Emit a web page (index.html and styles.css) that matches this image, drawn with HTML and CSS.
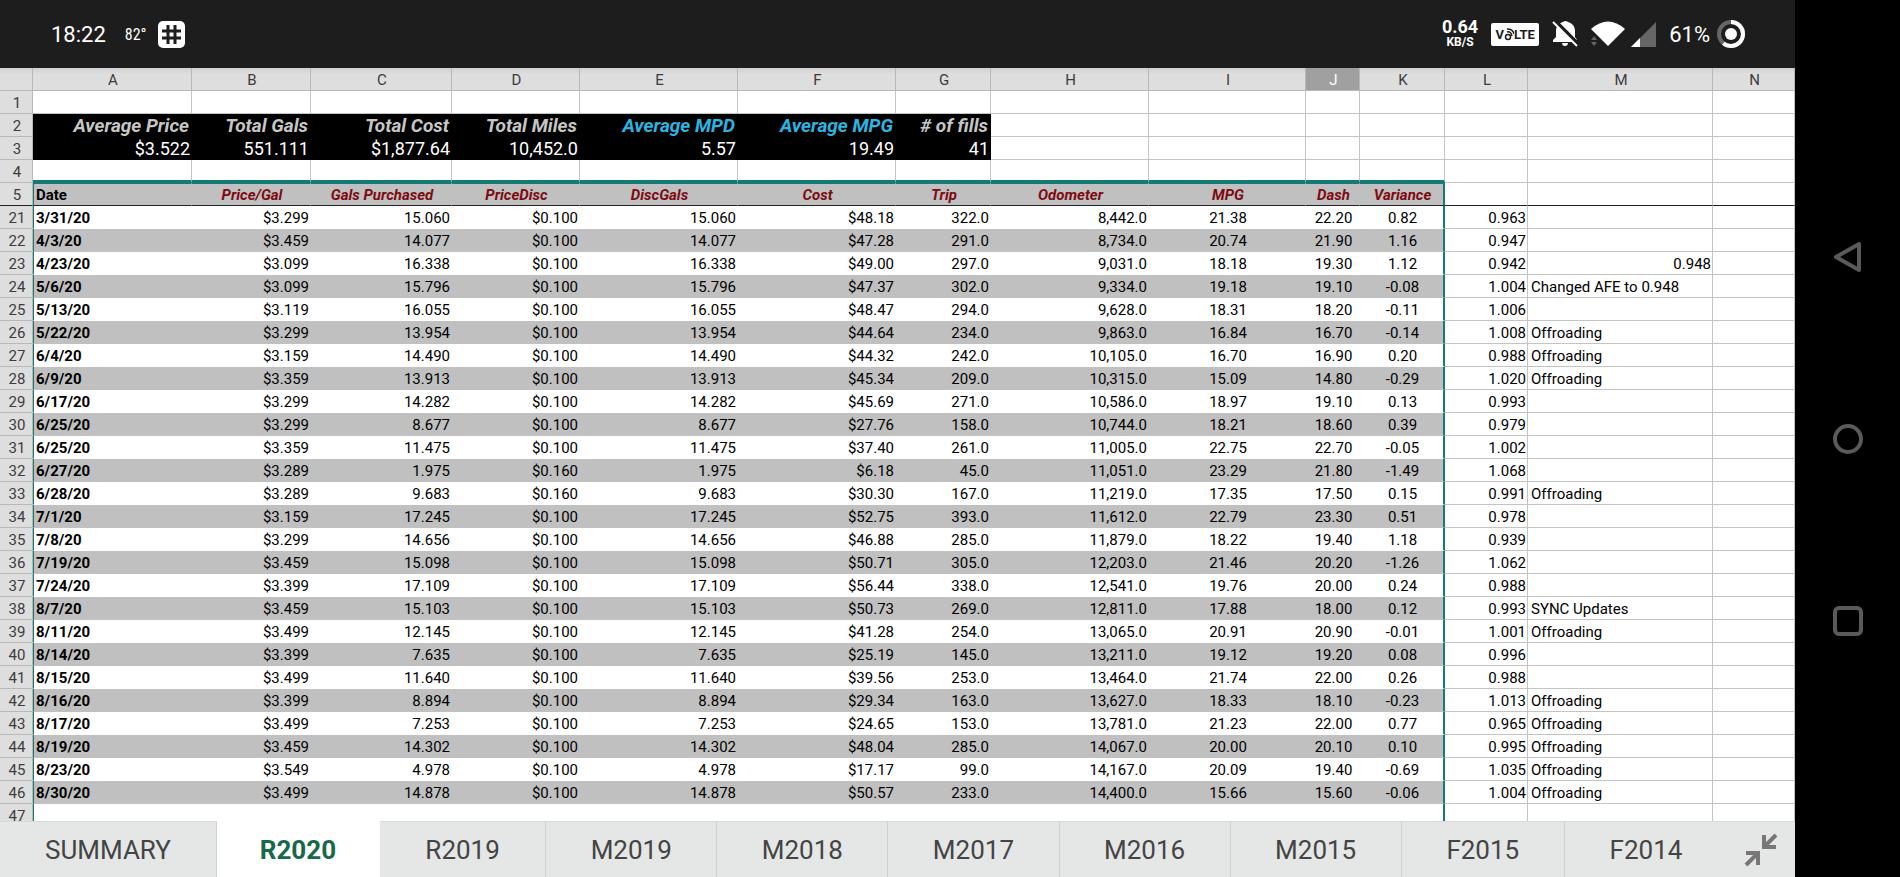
FILE: index.html
```html
<!DOCTYPE html>
<html lang="en">
<head>
    <meta charset="UTF-8">
    <meta name="viewport" content="width=device-width, initial-scale=1.0">
    <title>Fuel log</title>
    <link rel="stylesheet" href="styles.css">
</head>
<body>

<main class="app">
    <header class="status">
        <span class="clock">18:22</span>
        <span class="temp">82°</span>
        <svg class="hash" width="27" height="27" viewBox="0 0 27 27">
            <rect width="27" height="27" rx="5" fill="#fff"/>
            <path d="M10 4v19M17 4v19M4 10h19M4 17h19" stroke="#1d1d1d" stroke-width="3"/>
        </svg>

        <div class="speed"><b>0.64</b><small>KB/S</small></div>
        <span class="volte">V<svg width="10" height="14" viewBox="0 0 10 14" fill="none" stroke="#1d1d1d" stroke-width="1.5"><circle cx="4" cy="10" r="2.5"/><path d="M3 5q4-1 5 4M3 2q6 0 7 5"/></svg>LTE</span>
        <svg class="bell" width="27" height="26" viewBox="0 0 27 26">
            <path d="M13 0c-1 0-2 1-2 1-4 1-7 4-7 9v6l-3 3v2h24v-2l-2-3v-6c0-5-3-8-7-9 0 0-1-1-3-1zM10 22h6c0 4-6 4-6 0z" fill="#fff"/>
            <path d="M3 0l24 24" stroke="#1d1d1d" stroke-width="4"/>
            <path d="M1 1l24 24" stroke="#fff" stroke-width="2"/>
        </svg>
        <svg class="wifi" width="34" height="26" viewBox="0 0 34 26">
            <path d="M0 8q17-15 34 0L17 25z" fill="#fff"/>
            <path d="M0 19l3-4 3 4zM0 21l3 4 3-4z" fill="#666"/>
        </svg>
        <svg class="signal" width="25" height="25" viewBox="0 0 25 25">
            <path d="M25 0v25H0z" fill="#666"/>
            <path d="M9 16v9H0z" fill="#fff"/>
        </svg>
        <span class="battery">61%</span>
        <svg width="28" height="28" viewBox="0 0 28 28" fill="none" stroke-width="4">
            <circle cx="14" cy="14" r="12" stroke="#666"/>
            <circle cx="14" cy="14" r="12" stroke="#fff" pathLength="100" stroke-dasharray="61 39" transform="rotate(-90 14 14)"/>
            <circle cx="14" cy="14" r="6" fill="#fff"/>
        </svg>
    </header>

    <div class="sheet">
        <table>
            <colgroup>
                <col class="w-num"><col class="w-a"><col class="w-b"><col class="w-c"><col class="w-d">
                <col class="w-e"><col class="w-e"><col class="w-g"><col class="w-e"><col class="w-i">
                <col class="w-j"><col class="w-k"><col class="w-l"><col class="w-m"><col class="w-n">
            </colgroup>
            <thead>
                <tr>
                    <th></th><th>A</th><th>B</th><th>C</th><th>D</th><th>E</th><th>F</th><th>G</th>
                    <th>H</th><th>I</th><th class="active">J</th><th>K</th><th>L</th><th>M</th><th>N</th>
                </tr>
            </thead>
            <tbody id="rows"></tbody>
        </table>
    </div>

    <nav class="tabs">
        <button class="tab first">SUMMARY</button>
        <button class="tab current">R2020</button>
        <button class="tab medium">R2019</button>
        <button class="tab">M2019</button>
        <button class="tab">M2018</button>
        <button class="tab">M2017</button>
        <button class="tab">M2016</button>
        <button class="tab">M2015</button>
        <button class="tab short">F2015</button>
        <button class="tab short last">F2014</button>
        <button class="shrink" aria-label="Exit full screen">
            <svg width="34" height="34" viewBox="0 0 34 34" fill="none" stroke="#777" stroke-width="4">
                <path d="M32 2L21 13M20 2v12h12M2 32l11-11M2 20h12v12"/>
            </svg>
        </button>
    </nav>
</main>

<aside class="system">
    <button aria-label="Back"><svg width="30" height="30" viewBox="0 0 30 30"><path d="M26 2v26L3 15z"/></svg></button>
    <button aria-label="Home"><svg width="30" height="30" viewBox="0 0 30 30"><circle cx="15" cy="15" r="13"/></svg></button>
    <button aria-label="Recent apps"><svg width="30" height="30" viewBox="0 0 30 30"><rect x="2" y="2" width="26" height="26" rx="4"/></svg></button>
</aside>

<script>
    const COLS = 14;

    // date, price, gallons, discount, cost, trip, odometer, mpg, dash, variance, ratio, note
    const fills = [
        ['3/31/20', '3.299', '15.060', '0.100', '48.18', '322.0', '8,442.0', '21.38', '22.20', '0.82', '0.963'],
        ['4/3/20', '3.459', '14.077', '0.100', '47.28', '291.0', '8,734.0', '20.74', '21.90', '1.16', '0.947'],
        ['4/23/20', '3.099', '16.338', '0.100', '49.00', '297.0', '9,031.0', '18.18', '19.30', '1.12', '0.942', '0.948'],
        ['5/6/20', '3.099', '15.796', '0.100', '47.37', '302.0', '9,334.0', '19.18', '19.10', '-0.08', '1.004', 'Changed AFE to 0.948'],
        ['5/13/20', '3.119', '16.055', '0.100', '48.47', '294.0', '9,628.0', '18.31', '18.20', '-0.11', '1.006'],
        ['5/22/20', '3.299', '13.954', '0.100', '44.64', '234.0', '9,863.0', '16.84', '16.70', '-0.14', '1.008', 'Offroading'],
        ['6/4/20', '3.159', '14.490', '0.100', '44.32', '242.0', '10,105.0', '16.70', '16.90', '0.20', '0.988', 'Offroading'],
        ['6/9/20', '3.359', '13.913', '0.100', '45.34', '209.0', '10,315.0', '15.09', '14.80', '-0.29', '1.020', 'Offroading'],
        ['6/17/20', '3.299', '14.282', '0.100', '45.69', '271.0', '10,586.0', '18.97', '19.10', '0.13', '0.993'],
        ['6/25/20', '3.299', '8.677', '0.100', '27.76', '158.0', '10,744.0', '18.21', '18.60', '0.39', '0.979'],
        ['6/25/20', '3.359', '11.475', '0.100', '37.40', '261.0', '11,005.0', '22.75', '22.70', '-0.05', '1.002'],
        ['6/27/20', '3.289', '1.975', '0.160', '6.18', '45.0', '11,051.0', '23.29', '21.80', '-1.49', '1.068'],
        ['6/28/20', '3.289', '9.683', '0.160', '30.30', '167.0', '11,219.0', '17.35', '17.50', '0.15', '0.991', 'Offroading'],
        ['7/1/20', '3.159', '17.245', '0.100', '52.75', '393.0', '11,612.0', '22.79', '23.30', '0.51', '0.978'],
        ['7/8/20', '3.299', '14.656', '0.100', '46.88', '285.0', '11,879.0', '18.22', '19.40', '1.18', '0.939'],
        ['7/19/20', '3.459', '15.098', '0.100', '50.71', '305.0', '12,203.0', '21.46', '20.20', '-1.26', '1.062'],
        ['7/24/20', '3.399', '17.109', '0.100', '56.44', '338.0', '12,541.0', '19.76', '20.00', '0.24', '0.988'],
        ['8/7/20', '3.459', '15.103', '0.100', '50.73', '269.0', '12,811.0', '17.88', '18.00', '0.12', '0.993', 'SYNC Updates'],
        ['8/11/20', '3.499', '12.145', '0.100', '41.28', '254.0', '13,065.0', '20.91', '20.90', '-0.01', '1.001', 'Offroading'],
        ['8/14/20', '3.399', '7.635', '0.100', '25.19', '145.0', '13,211.0', '19.12', '19.20', '0.08', '0.996'],
        ['8/15/20', '3.499', '11.640', '0.100', '39.56', '253.0', '13,464.0', '21.74', '22.00', '0.26', '0.988'],
        ['8/16/20', '3.399', '8.894', '0.100', '29.34', '163.0', '13,627.0', '18.33', '18.10', '-0.23', '1.013', 'Offroading'],
        ['8/17/20', '3.499', '7.253', '0.100', '24.65', '153.0', '13,781.0', '21.23', '22.00', '0.77', '0.965', 'Offroading'],
        ['8/19/20', '3.459', '14.302', '0.100', '48.04', '285.0', '14,067.0', '20.00', '20.10', '0.10', '0.995', 'Offroading'],
        ['8/23/20', '3.549', '4.978', '0.100', '17.17', '99.0', '14,167.0', '20.09', '19.40', '-0.69', '1.035', 'Offroading'],
        ['8/30/20', '3.499', '14.878', '0.100', '50.57', '233.0', '14,400.0', '15.66', '15.60', '-0.06', '1.004', 'Offroading']
    ];

    const tbody = document.getElementById('rows');

    function addRow(number, cls, values) {
        let cells = `<th scope="row">${number}</th>`;
        for (let i = 0; i < COLS; i++) {
            const text = values[i] || '';
            // a number in the notes column goes to the right like any other number
            const note = i === 12 && isNaN(text) ? ' class="note"' : '';
            cells += `<td${note}>${text}</td>`;
        }
        tbody.insertAdjacentHTML('beforeend', `<tr class="${cls}">${cells}</tr>`);
    }

    addRow(1, 'blank', []);
    addRow(2, 'summary titles', ['Average Price', 'Total Gals', 'Total Cost', 'Total Miles', 'Average MPD', 'Average MPG', '# of fills']);
    addRow(3, 'summary', ['$3.522', '551.111', '$1,877.64', '10,452.0', '5.57', '19.49', '41']);
    addRow(4, 'blank above', []);
    addRow(5, 'log heading', ['Date', 'Price/Gal', 'Gals Purchased', 'PriceDisc', 'DiscGals', 'Cost', 'Trip', 'Odometer', 'MPG', 'Dash', 'Variance']);

    fills.forEach((f, i) => {
        const [date, price, gals, disc, cost, ...rest] = f;
        addRow(21 + i, i % 2 ? 'log striped' : 'log', [date, '$' + price, gals, '$' + disc, gals, '$' + cost, ...rest]);
    });
    addRow(47, 'log', []);
</script>

</body>
</html>
```
FILE: styles.css
```css
* {
    box-sizing: border-box;
}
body {
    margin: 0;
    display: flex;
    height: 100vh;
    background: #000;
    font-family: Roboto, sans-serif;
    overflow: hidden;
}
button {
    border: none;
    padding: 0;
    background: none;
    font-family: inherit;
    cursor: pointer;
}
svg {
    display: block;
    flex: none;
}
.app {
    flex: 1;
    min-width: 0;
    display: flex;
    flex-direction: column;
}

/* status bar */
.status {
    flex: none;
    display: flex;
    align-items: center;
    height: 68px;
    padding: 0 50px 0 51px;
    background: #1d1d1d;
    color: #fff;
    font-size: 22px;
}
.temp {
    margin-left: 19px;
    font-family: "Roboto Condensed", "Liberation Sans Narrow", Roboto, sans-serif;
    font-size: 16px;
}
.hash {
    margin-left: 11px;
}
.speed {
    margin-left: auto;
    text-align: center;
}
.speed b {
    display: block;
    font-size: 18px;
    line-height: 16px;
    font-weight: 700;
}
.speed small {
    display: block;
    font-size: 12px;
    line-height: 14px;
    font-weight: 700;
}
.volte {
    display: flex;
    align-items: center;
    justify-content: center;
    width: 48px;
    height: 23px;
    margin-left: 13px;
    border-radius: 2px;
    background: #fff;
    color: #1d1d1d;
    font-size: 13px;
    font-weight: 700;
}
.bell {
    margin-left: 13px;
}
.wifi {
    margin-left: 12px;
}
.signal {
    margin-left: 6px;
}
.battery {
    margin: 0 7px 0 13px;
}

/* sheet */
.sheet {
    flex: 1;
    min-height: 0;
    overflow: auto;
    scrollbar-width: none;
    background: #fff;
}
table {
    width: 100%;
    table-layout: fixed;
    border-collapse: separate;
    border-spacing: 0;
    font-size: 15px;
    line-height: 20px;
}
.w-num { width: 33px; }
.w-a { width: 159px; }
.w-b { width: 119px; }
.w-c { width: 141px; }
.w-d { width: 128px; }
.w-e { width: 158px; }
.w-g { width: 95px; }
.w-i { width: 157px; }
.w-j { width: 54px; }
.w-k { width: 85px; }
.w-l { width: 83px; }
.w-m { width: 185px; }
.w-n { width: 82px; }

th, td {
    height: 23px;
    padding: 2px 1px 0 3px;
    border-right: 1px solid #c4c4c4;
    border-bottom: 1px solid #c4c4c4;
    white-space: nowrap;
}
th {
    background: #dedede;
    color: #3c3c3c;
    font-weight: 400;
    border-color: #b8b8b8;
}
thead th {
    background: linear-gradient(#cfcfcf, #dedede 6px);
}
thead th.active {
    background: #a0a0a0;
    color: #fff;
}
td {
    text-align: right;
    color: #000;
}
td.note {
    text-align: left;
}

.summary td {
    font-size: 18px;
}
.summary td:nth-child(-n+8) {
    background: #000;
    border-color: #000;
    color: #fff;
}
.titles td:nth-child(-n+8) {
    padding-right: 2px;
    font-size: 19px;
    font-weight: 700;
    font-style: italic;
    color: #c6c6c6;
}
.titles td:nth-child(6), .titles td:nth-child(7) {
    color: #2bb5e0;
}

.above td:nth-child(-n+12) {
    border-bottom: 3px solid #137a75;
}
.above td {
    line-height: 18px;
}

/* fill-up log, columns A to K */
.log td:nth-child(-n+12) {
    border-color: transparent;
}
.log td:nth-child(2) {
    padding-left: 2px;
    border-left: 1px solid #137a75;
    text-align: left;
    font-weight: 700;
}
.log td:nth-child(n+10):nth-child(-n+12) {
    text-align: center;
}
.log td:nth-child(12) {
    border-right: 2px solid #137a75;
}
.striped td:nth-child(-n+12), .heading td:nth-child(-n+12) {
    background: #c0c0c0;
}
.heading td:nth-child(n+3) {
    text-align: center;
    font-weight: 700;
    font-style: italic;
    color: #7d0b12;
}
.heading td:nth-child(-n+12) {
    padding-top: 1px;
    border-top: 1px solid #137a75;
}
.heading th, .heading td, .heading td:nth-child(-n+12) {
    border-bottom-color: #222;
}

/* sheet tabs */
.tabs {
    flex: none;
    display: flex;
    height: 56px;
    background: #e5e7e6;
}
.tab {
    flex: 171 1 0;
    border-right: 1px solid #d0d2d1;
    border-top: 1px solid #d8dad9;
    color: #444;
    font-size: 26px;
}
.tab.first {
    flex-grow: 217;
}
.tab.medium {
    flex-grow: 166;
}
.tab.short, .tab.current {
    flex-grow: 163;
}
.tab.current {
    background: #fff;
    border-color: #fff;
    color: #17694a;
    font-weight: 700;
}
.tab.last {
    border-right: none;
}
.shrink {
    display: flex;
    align-items: center;
    justify-content: center;
    width: 68px;
    border-top: 1px solid #d8dad9;
}

/* phone navigation keys */
.system {
    flex: none;
    display: flex;
    flex-direction: column;
    align-items: center;
    justify-content: center;
    gap: 152px;
    width: 105px;
}
.system svg {
    fill: none;
    stroke: #5a5a5a;
    stroke-width: 4;
    stroke-linejoin: round;
}
```
